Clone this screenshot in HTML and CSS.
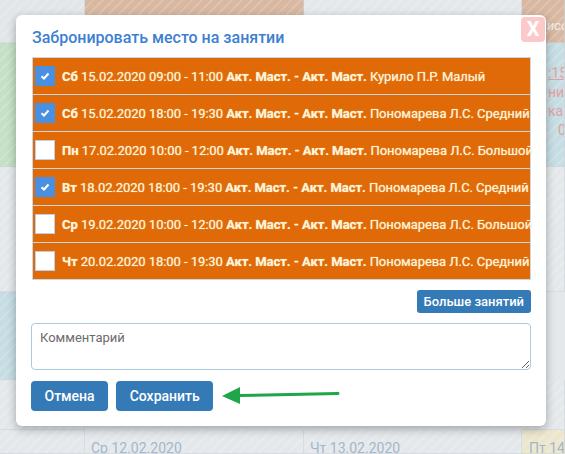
FILE: index.html
```html
<!DOCTYPE html>
<html lang="ru">
<head>
<meta charset="utf-8">
<link rel="stylesheet" href="styles.css">
</head>
<body>
<div class="page">
  <div class="calendar">
    <div class="cell peach c1 r1 light"></div>
    <div class="cell peach c2 r1"></div>
    <div class="cell light c3 r1"></div>
    <div class="cell peach c4 r1"><span class="ghost">исс</span></div>
    <div class="cell green c1 r2"></div>
    <div class="cell light c2 r2"></div>
    <div class="cell light c3 r2"></div>
    <div class="cell blue c4 r2">
      <span class="red u">:15</span>
      <span class="red">ние</span>
      <span class="red">ка</span>
      <span class="red">0 /</span>
    </div>
    <div class="cell light c1 r3"></div>
    <div class="cell blue c1 r4"></div>
    <div class="cell light c1 r5"></div>
    <div class="cell light c4 r3"></div>
    <div class="cell light c4 r5"></div>
    <div class="cell light c1 r6"></div>
    <div class="cell light c2 r6"><span class="date">Ср 12.02.2020</span></div>
    <div class="cell light c3 r6"><span class="date">Чт 13.02.2020</span></div>
    <div class="cell yellow c4 r6"><span class="date">Пт 14</span></div>
  </div>

  <div class="modal">
    <button class="close">X</button>
    <h2 class="title">Забронировать место на занятии</h2>
    <ul class="lessons">
      <li class="lesson"><span class="box checked"><svg viewBox="0 0 10 10" width="10" height="10"><path d="M1.5 5.2 L4 7.5 L8.5 2.5" fill="none" stroke="#fff" stroke-width="2"/></svg></span><span class="txt"><b>Сб</b> 15.02.2020 09:00 - 11:00 <b>Акт. Маст. - Акт. Маст.</b> Курило П.Р. Малый</span></li>
      <li class="lesson"><span class="box checked"><svg viewBox="0 0 10 10" width="10" height="10"><path d="M1.5 5.2 L4 7.5 L8.5 2.5" fill="none" stroke="#fff" stroke-width="2"/></svg></span><span class="txt"><b>Сб</b> 15.02.2020 18:00 - 19:30 <b>Акт. Маст. - Акт. Маст.</b> Пономарева Л.С. Средний</span></li>
      <li class="lesson"><span class="box"></span><span class="txt"><b>Пн</b> 17.02.2020 10:00 - 12:00 <b>Акт. Маст. - Акт. Маст.</b> Пономарева Л.С. Большой</span></li>
      <li class="lesson"><span class="box checked"><svg viewBox="0 0 10 10" width="10" height="10"><path d="M1.5 5.2 L4 7.5 L8.5 2.5" fill="none" stroke="#fff" stroke-width="2"/></svg></span><span class="txt"><b>Вт</b> 18.02.2020 18:00 - 19:30 <b>Акт. Маст. - Акт. Маст.</b> Пономарева Л.С. Средний</span></li>
      <li class="lesson"><span class="box"></span><span class="txt"><b>Ср</b> 19.02.2020 10:00 - 12:00 <b>Акт. Маст. - Акт. Маст.</b> Пономарева Л.С. Большой</span></li>
      <li class="lesson"><span class="box"></span><span class="txt"><b>Чт</b> 20.02.2020 18:00 - 19:30 <b>Акт. Маст. - Акт. Маст.</b> Пономарева Л.С. Средний</span></li>
    </ul>
    <div class="more-row"><button class="btn small">Больше занятий</button></div>
    <textarea class="comment" placeholder="Комментарий"></textarea>
    <div class="actions">
      <button class="btn">Отмена</button>
      <button class="btn">Сохранить</button>
    </div>
  </div>

  <svg class="arrow" width="130" height="24" viewBox="0 0 130 24">
    <path d="M16 12.5 L116 10.5" stroke="#1fa64a" stroke-width="3" stroke-linecap="round"/>
    <path d="M0 13 L18 4 L18 21 Z" fill="#1fa64a"/>
  </svg>
</div>
</body>
</html>
```
FILE: styles.css
```css
* { box-sizing: border-box; }
html, body { margin: 0; padding: 0; }
body {
  font-family: Roboto, "Liberation Sans", sans-serif;
  width: 565px;
  height: 454px;
  overflow: hidden;
  background: #e4e8eb;
}
.page {
  position: relative;
  width: 565px;
  height: 454px;
}
.calendar {
  display: grid;
  grid-template-columns: 85px 219px 218px 43px;
  grid-template-rows: 43px 124px 125px 88px 50px 24px;
  width: 565px;
  height: 454px;
}
.cell {
  border-right: 1px solid rgba(205, 212, 219, 0.6);
  border-bottom: 1px solid rgba(205, 212, 219, 0.6);
  background-image: repeating-linear-gradient(135deg, rgba(255,255,255,0) 0 5px, rgba(255,255,255,0.16) 5px 7px);
  overflow: hidden;
  display: flex;
  flex-direction: column;
}
.c1 { grid-column: 1; }
.c2 { grid-column: 2; }
.c3 { grid-column: 3; }
.c4 { grid-column: 4; }
.r1 { grid-row: 1; }
.r2 { grid-row: 2; }
.r3 { grid-row: 3; }
.r4 { grid-row: 4; }
.r5 { grid-row: 5; }
.r6 { grid-row: 6; }
.peach { background-color: #d8b8a1; }
.c1.r1 { background-color: #e2e6e9; }
.light { background-color: #e4e8eb; }
.green { background-color: #c4e0c5; }
.blue { background-color: #c6dde4; }
.yellow { background-color: #ece6cd; }
.ghost {
  color: #eee;
  font-style: italic;
  font-size: 13px;
  padding: 18px 0 0 25px;
  white-space: nowrap;
}
.blue.c4 { padding: 22px 0 0 26px; gap: 3px; }
.red { color: #e4a0a0; font-size: 14px; line-height: 16px; white-space: nowrap; }
.red.u { text-decoration: underline; }
.red:last-child { padding-left: 10px; }
.date {
  color: #a4b6ca;
  font-size: 14px;
  padding: 10px 0 0 6px;
  white-space: nowrap;
}
.c4 .date { padding-left: 7px; }

.modal {
  position: absolute;
  left: 16px;
  top: 15px;
  width: 530px;
  background: #fff;
  border-radius: 6px;
  box-shadow: 0 3px 10px rgba(0, 0, 0, 0.3);
  padding: 14px 15px 15px 15px;
}
.close {
  position: absolute;
  right: 1px;
  top: 2px;
  width: 24px;
  height: 25px;
  border: none;
  border-radius: 4px;
  background: #fbc9c9;
  color: #fff;
  font-family: Roboto, "Liberation Sans", sans-serif;
  font-weight: 700;
  font-size: 20px;
  line-height: 25px;
  padding: 0;
  text-align: center;
}
.title {
  margin: 0 0 10px 1px;
  font-size: 16px;
  font-weight: 500;
  line-height: 18px;
  color: #3d80d2;
}
.lessons {
  list-style: none;
  margin: 0 0 0 1px;
  padding: 0;
  border: 1px solid #cdd7e2;
  border-bottom: none;
}
.lesson {
  display: flex;
  align-items: center;
  height: 37px;
  background: #e06a08;
  border-bottom: 1px solid #cdd7e2;
  padding-left: 2px;
  gap: 7px;
  white-space: nowrap;
}
.box {
  width: 20px;
  height: 20px;
  background: #fff;
  border: 1px solid #bcd0ea;
  display: flex;
  align-items: center;
  justify-content: center;
  flex: none;
}
.box.checked {
  background: #4a90e2;
  border-color: #4a90e2;
}
.txt {
  font-size: 13px;
  color: #fff4d8;
  text-shadow: 0 0 1px rgba(255, 236, 190, 0.8);
  letter-spacing: -0.05px;
}
.txt b { font-weight: 700; }
.more-row {
  display: flex;
  justify-content: flex-end;
  margin-top: 10px;
}
.btn {
  border: none;
  background: #337ab7;
  color: #fff;
  font-family: Roboto, "Liberation Sans", sans-serif;
  font-weight: 500;
  font-size: 14px;
  height: 30px;
  padding: 0 13.5px;
  border-radius: 4px;
}
.btn.small {
  height: 23px;
  font-size: 13px;
  padding: 0 7px;
  border-radius: 3px;
}
.comment {
  display: block;
  width: 500px;
  height: 47px;
  margin-top: 10px;
  border: 1px solid #a8cbe0;
  border-radius: 4px;
  padding: 6px 8px;
  font-family: Roboto, "Liberation Sans", sans-serif;
  font-size: 13px;
  resize: vertical;
}
.comment::placeholder { color: #6b6b6b; }
.actions {
  display: flex;
  gap: 8px;
  margin-top: 11px;
}
.arrow {
  position: absolute;
  left: 222px;
  top: 383px;
}
```
